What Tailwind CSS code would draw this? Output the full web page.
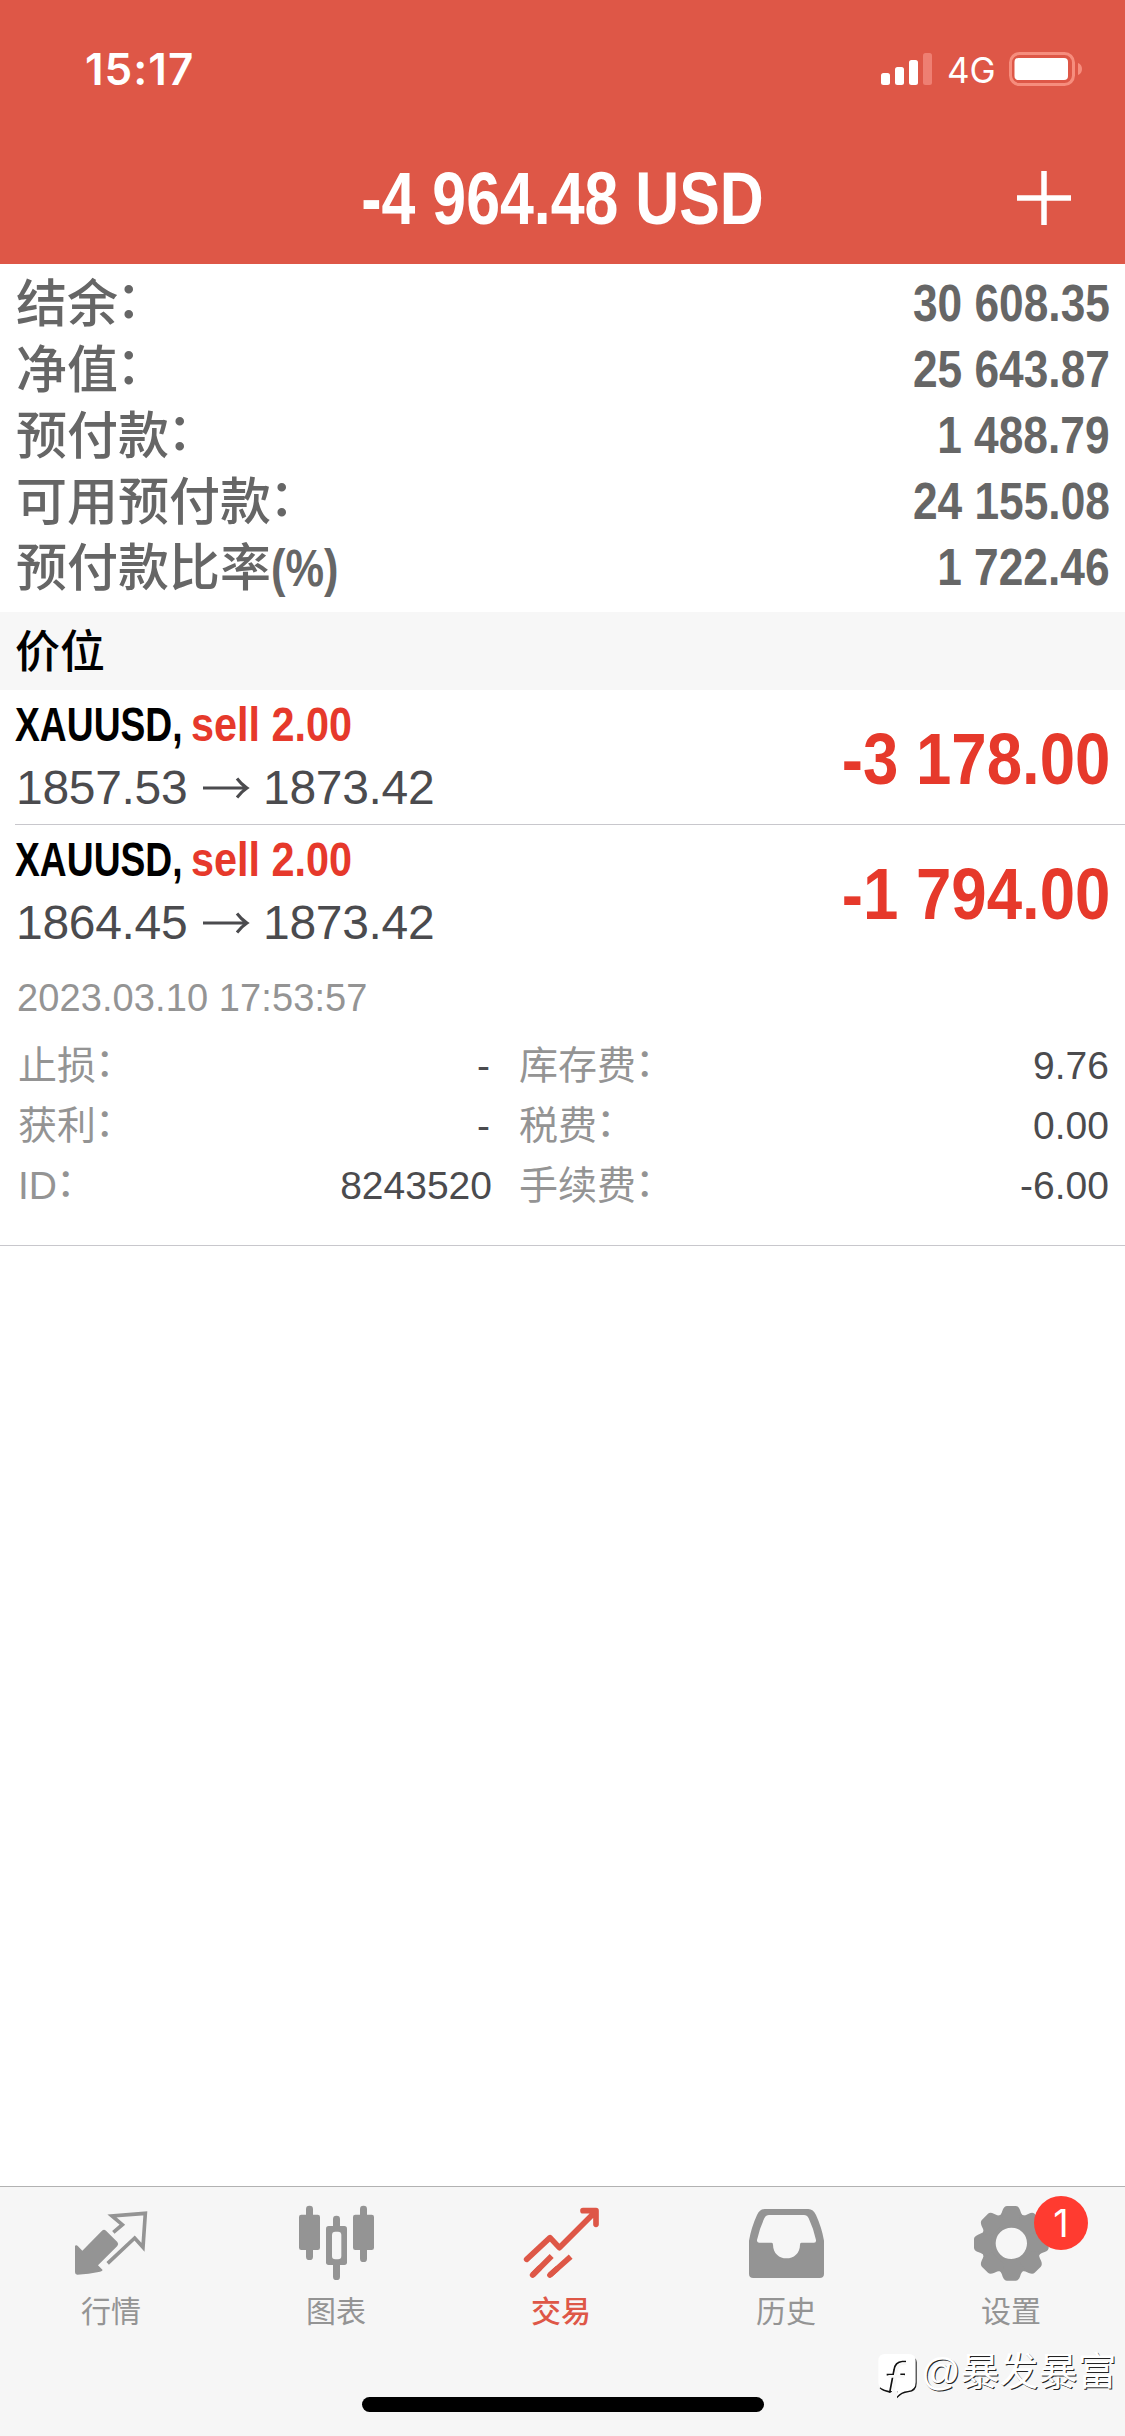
<!DOCTYPE html>
<html lang="zh-CN">
<head>
<meta charset="utf-8">
<title>交易</title>
<script src="https://cdn.jsdelivr.net/npm/@tailwindcss/browser@4"></script>
</head>
<body class="bg-white">
<div class="relative flex h-[2436px] w-[1125px] flex-col overflow-hidden bg-white font-['Liberation_Sans','Noto_Sans_CJK_SC',sans-serif]">

  <header class="h-[264px] bg-[#de5747] text-white">
    <div class="flex h-[138px] items-center justify-between pr-[43px] pl-[85px] font-['Inter',sans-serif]">
      <span class="text-[44px] leading-none font-semibold tracking-[1px]">15:17</span>
      <div class="flex items-center">
        <svg class="h-[32px] w-[52px]" viewBox="0 0 52 32" fill="#fff">
          <rect x="0" y="20" width="9" height="12" rx="2.5"/>
          <rect x="14" y="14" width="9" height="18" rx="2.5"/>
          <rect x="28" y="7" width="9" height="25" rx="2.5"/>
          <rect x="42" y="0" width="9" height="32" rx="2.5" fill="#ee7f72"/>
        </svg>
        <span class="ml-[14px] w-[50px] pt-[2px] text-[35px] leading-none">4G</span>
        <svg class="ml-[12px] h-[34px] w-[73px]" viewBox="0 0 73 34">
          <rect x="1.500" y="1.500" width="63" height="31" rx="9" fill="none" stroke="#f68d7d" stroke-width="3"/>
          <rect x="5.500" y="6" width="53.500" height="22" rx="4" fill="#fff"/>
          <path d="M69 11c3 1 4 3.500 4 6s-1 5-4 6z" fill="#f68d7d"/>
        </svg>
      </div>
    </div>
    <div class="grid h-[120px] grid-cols-[56px_1fr_56px] items-center px-[53px] pt-[2px]">
      <span></span>
      <h1 class="scale-x-[.822] text-center text-[74px] leading-none font-bold whitespace-nowrap">-4 964.48 USD</h1>
      <svg class="mb-[3px] h-[56px] w-[56px]" viewBox="0 0 56 56" stroke="#fff" stroke-width="5.500"><path d="M28 1v54M1 28h54"/></svg>
    </div>
  </header>

  <section class="h-[348px] pt-[7px] pr-[15px] pl-[16px] text-[51px] leading-[66px] text-[#666]">
    <div class="flex justify-between"><span class="translate-y-[1px] font-medium">结余<span class="inline-block -translate-x-[2px] -translate-y-[4px]">：</span></span><span class="origin-right scale-x-[.868] font-bold">30 608.35</span></div>
    <div class="flex justify-between"><span class="translate-y-[1px] font-medium">净值<span class="inline-block -translate-x-[2px] -translate-y-[4px]">：</span></span><span class="origin-right scale-x-[.868] font-bold">25 643.87</span></div>
    <div class="flex justify-between"><span class="translate-y-[1px] font-medium">预付款<span class="inline-block -translate-x-[2px] -translate-y-[4px]">：</span></span><span class="origin-right scale-x-[.868] font-bold">1 488.79</span></div>
    <div class="flex justify-between"><span class="translate-y-[1px] font-medium">可用预付款<span class="inline-block -translate-x-[2px] -translate-y-[4px]">：</span></span><span class="origin-right scale-x-[.868] font-bold">24 155.08</span></div>
    <div class="flex justify-between"><span class="translate-y-[1px] font-medium">预付款比率<span class="inline-block origin-left scale-x-[.85] font-bold">(%)</span></span><span class="origin-right scale-x-[.868] font-bold">1 722.46</span></div>
  </section>

  <h2 class="h-[78px] bg-[#f7f7f7] pt-[2px] pl-[15px] text-[45px] leading-[78px] font-medium text-black">价位</h2>

  <section class="flex h-[135px] justify-between pt-[2px] pl-[15px]">
    <div class="flex w-full justify-between border-b border-[#c8c7cc] pr-[15px]">
      <div>
        <div class="flex h-[64px] text-[49px] leading-[64px] font-bold">
          <span class="w-[176px] origin-left scale-x-[.76] text-black">XAUUSD,</span><span class="origin-left scale-x-[.845] text-[#e6392b]">sell 2.00</span>
        </div>
        <div class="flex h-[64px] items-center pl-[1px] text-[48px] leading-[64px] tracking-[-.3px] text-[#4b4b4e]">
          <span class="w-[187px]">1857.53</span>
          <svg class="h-[22px] w-[60px]" viewBox="0 0 60 22" fill="none" stroke="#4b4b4e" stroke-width="3"><path d="M0 11H44M34 1.500Q38 7 44 11Q38 15 34 20.500"/></svg>
          <span>1873.42</span>
        </div>
      </div>
      <span class="origin-right scale-x-[.871] text-[73px] leading-[133px] font-bold whitespace-nowrap text-[#e6392b]">-3 178.00</span>
    </div>
  </section>

  <section class="h-[421px] border-b border-[#c8c7cc] pt-[2px] pr-[15px] pl-[15px]">
    <div class="flex h-[133px] justify-between">
      <div>
        <div class="flex h-[64px] text-[49px] leading-[64px] font-bold">
          <span class="w-[176px] origin-left scale-x-[.76] text-black">XAUUSD,</span><span class="origin-left scale-x-[.845] text-[#e6392b]">sell 2.00</span>
        </div>
        <div class="flex h-[64px] items-center pl-[1px] text-[48px] leading-[64px] tracking-[-.3px] text-[#4b4b4e]">
          <span class="w-[187px]">1864.45</span>
          <svg class="h-[22px] w-[60px]" viewBox="0 0 60 22" fill="none" stroke="#4b4b4e" stroke-width="3"><path d="M0 11H44M34 1.500Q38 7 44 11Q38 15 34 20.500"/></svg>
          <span>1873.42</span>
        </div>
      </div>
      <span class="origin-right scale-x-[.871] text-[73px] leading-[133px] font-bold whitespace-nowrap text-[#e6392b]">-1 794.00</span>
    </div>
    <div class="pt-[1px] pl-[2px] text-[38px] leading-[75px] tracking-[.1px] text-[#949494]">2023.03.10 17:53:57</div>
    <div class="grid grid-cols-[474px_590px] gap-x-[27px] pl-[3px] text-[39px] leading-[60px] text-[#4b4b4e]">
      <div class="flex justify-between"><span class="text-[#949494]">止损<span class="inline-block -translate-x-[1px] -translate-y-[3px]">：</span></span><span class="pr-[2px]">-</span></div>
      <div class="flex justify-between"><span class="text-[#949494]">库存费<span class="inline-block -translate-x-[1px] -translate-y-[3px]">：</span></span><span>9.76</span></div>
      <div class="flex justify-between"><span class="text-[#949494]">获利<span class="inline-block -translate-x-[1px] -translate-y-[3px]">：</span></span><span class="pr-[2px]">-</span></div>
      <div class="flex justify-between"><span class="text-[#949494]">税费<span class="inline-block -translate-x-[1px] -translate-y-[3px]">：</span></span><span>0.00</span></div>
      <div class="flex justify-between"><span class="text-[#949494]">ID<span class="inline-block -translate-x-[1px] -translate-y-[3px]">：</span></span><span>8243520</span></div>
      <div class="flex justify-between"><span class="text-[#949494]">手续费<span class="inline-block -translate-x-[1px] -translate-y-[3px]">：</span></span><span>-6.00</span></div>
    </div>
  </section>

  <main class="flex-1"></main>

  <nav class="h-[250px] border-t border-[#b2b2b2] bg-[#f6f6f6] text-center text-[30px] text-[#949494]">
    <div class="grid h-[210px] grid-cols-5">
      <div>
        <svg class="h-[100px] w-[225px]" viewBox="0 51 675 300" fill="#949494">
          <path d="M306 182q6-5 12 0l34 34q5 6 0 12l-58 58 14 14q-1 4-8 5-34 7-68 9-7 0-7-7v-80q5-3 9 2l13 13z"/>
          <path d="M340 187l27-23-31-26 100-8-7 102-25-28-81 76" fill="none" stroke="#949494" stroke-width="11"/>
        </svg>
        <p class="h-[42px] pr-[3px] leading-[49px]">行情</p>
      </div>
      <div>
        <svg class="h-[100px] w-[225px]" viewBox="675 51 675 300" fill="#949494">
          <rect x="918" y="107" width="21" height="163" rx="10"/><rect x="897" y="134" width="63" height="106" rx="7"/>
          <rect x="1080" y="107" width="21" height="169" rx="10"/><rect x="1059" y="134" width="63" height="106" rx="7"/>
          <rect x="999" y="137" width="21" height="193" rx="10"/><rect x="978" y="168" width="63" height="117" rx="8"/>
          <rect x="996" y="185" width="28" height="83" rx="10" fill="#f6f6f6"/>
        </svg>
        <p class="h-[42px] pr-[3px] leading-[49px]">图表</p>
      </div>
      <div class="text-[#de5747]">
        <svg class="h-[100px] w-[225px]" viewBox="150 51 675 300" fill="none" stroke="#de5747" stroke-width="17" stroke-linecap="round" stroke-linejoin="round">
          <path d="M380 268l70-65 28 30 108-108M549 122h39v41"/>
          <path d="M398 315l57-57M450 315l62-55" stroke-linecap="butt"/><path d="M398 315l20-20M450 315l20-18"/>
        </svg>
        <p class="h-[42px] pr-[3px] leading-[49px] font-medium">交易</p>
      </div>
      <div>
        <svg class="h-[100px] w-[225px]" viewBox="825 51 675 300" fill="#949494">
          <path fill-rule="evenodd" d="M1047 311V212Q1054 172 1071 135Q1079 117 1094 117H1225Q1240 117 1248 135Q1265 172 1272 212V311Q1272 324 1259 324H1060Q1047 324 1047 311ZM1107 135Q1098 135 1093 145Q1078 177 1071 210Q1070 218 1077 218H1115Q1119 218 1119 224C1119 250 1138 265 1159.500 265S1200 250 1200 224Q1200 218 1204 218H1242Q1249 218 1248 210Q1241 177 1226 145Q1221 135 1212 135Z"/>
        </svg>
        <p class="h-[42px] pr-[3px] leading-[49px]">历史</p>
      </div>
      <div class="relative">
        <svg class="h-[100px] w-[225px]" viewBox="300 51 675 300" fill="#949494">
          <defs><path id="tooth" d="M592 142Q603 138 608 120Q613 108 621 108H647Q655 108 660 120Q665 138 676 142L660 160H608Z"/></defs>
          <circle cx="634" cy="220" r="69" fill="none" stroke="#949494" stroke-width="44"/>
          <use href="#tooth"/><use href="#tooth" transform="rotate(45 634 220)"/><use href="#tooth" transform="rotate(90 634 220)"/><use href="#tooth" transform="rotate(135 634 220)"/><use href="#tooth" transform="rotate(180 634 220)"/><use href="#tooth" transform="rotate(225 634 220)"/><use href="#tooth" transform="rotate(270 634 220)"/><use href="#tooth" transform="rotate(315 634 220)"/>
        </svg>
        <span class="absolute top-[9px] left-[134px] h-[54px] w-[54px] rounded-full bg-[#ff3b30] font-['Inter',sans-serif] text-[38px] leading-[54px] text-white">1</span>
        <p class="h-[42px] pr-[3px] leading-[49px]">设置</p>
      </div>
    </div>
    <div class="mx-auto h-[15px] w-[402px] rounded-full bg-black"></div>
  </nav>

  <div class="absolute top-[2350px] left-[877px] flex items-start text-white">
    <svg class="h-[50px] w-[44px]" viewBox="36 30 132 150" fill="none">
      <path d="M133 48Q155 50 155 67V130Q155 155 130 157Q110 159 96 175V150L74 158Q50 153 44 145L60 120Z" fill="#111"/>
      <path d="M60 42H131Q152 42 152 62V127Q152 151 128 153Q108 155 95 170L97 153H74Q40 148 40 130V62Q40 42 60 42Z" fill="#fff"/>
      <path d="M123 65H112Q90 66 87 90L74 158M65 104H84M106 103H120" stroke="#111" stroke-width="5"/>
      <path d="M124 71H113Q98 73 94 94L84 158M70 109H118" stroke="#f8f8f8" stroke-width="8"/>
    </svg>
    <span class="text-[39px] leading-[44px] whitespace-nowrap text-shadow-[1px_1px_0px_#222]">@暴发暴富</span>
  </div>
</div>
</body>
</html>
